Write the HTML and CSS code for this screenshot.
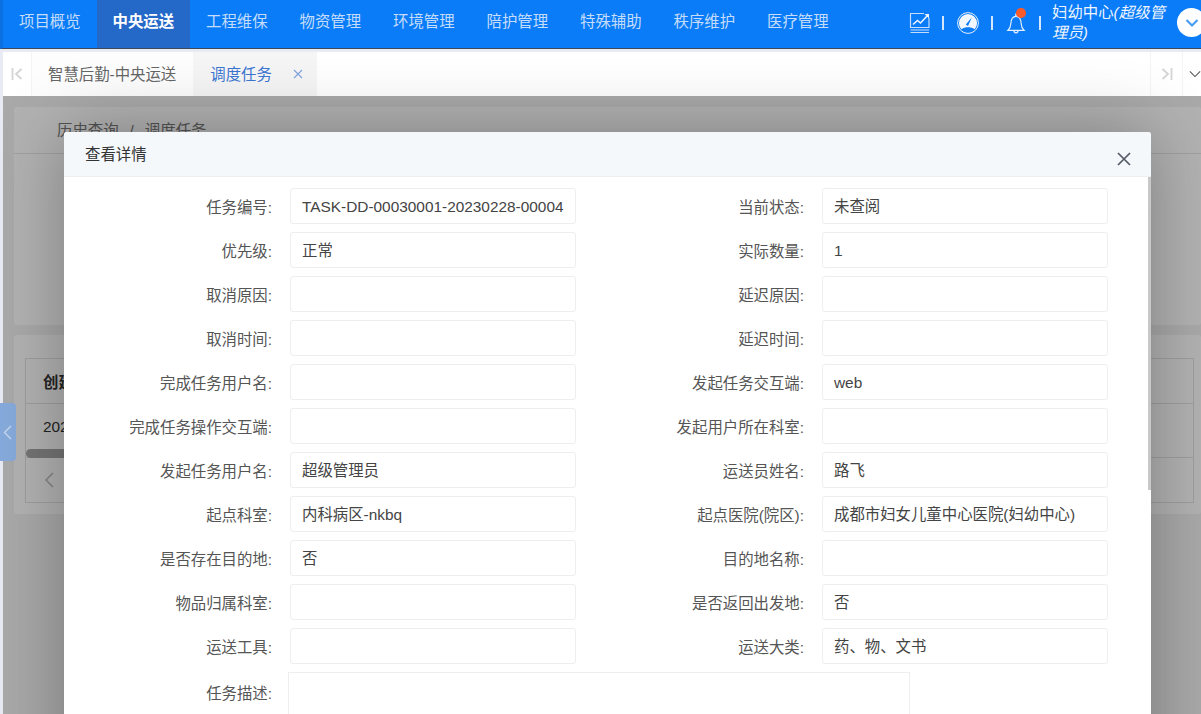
FILE: index.html
```html
<!DOCTYPE html>
<html lang="zh-CN">
<head>
<meta charset="utf-8">
<title>调度任务</title>
<link rel="stylesheet" href="styles.css">
</head>
<body>
<div class="app">
  <header class="topbar">
    <nav class="nav">
      <a class="nav-item">项目概览</a>
      <a class="nav-item active">中央运送</a>
      <a class="nav-item">工程维保</a>
      <a class="nav-item">物资管理</a>
      <a class="nav-item">环境管理</a>
      <a class="nav-item">陪护管理</a>
      <a class="nav-item">特殊辅助</a>
      <a class="nav-item">秩序维护</a>
      <a class="nav-item">医疗管理</a>
    </nav>
    <div class="tools">
      <svg class="tool-icon" viewBox="0 0 22 22" fill="none" stroke="#c5ddfa" stroke-width="1.200">
        <path d="M15 1.500H1.500v14H20V6"/>
        <path d="M4 12.500l4.500-4 3 2.500 7-7.500" stroke-width="1.500" stroke="#eef5ff"/>
        <path d="M15.500 2h4.500v4.500z" fill="#eef5ff" stroke="none"/>
        <path d="M1.500 18h18.500M1.500 20.500h18.500" stroke-width="1.200"/>
      </svg>
      <i class="sep"></i>
      <svg class="tool-icon" viewBox="0 0 22 22">
        <circle cx="11" cy="11" r="10.400" fill="none" stroke="#e4effc" stroke-width="1"/>
        <path d="M2 11a9 9 0 0 1 18 0c0 3-1.200 4.800-2.500 6.200-3.500-2.600-9.500-2.600-13 0C3.200 15.800 2 14 2 11z" fill="#f2f7fe"/>
        <path d="M8.800 12.500l6-7-3.800 8.500z" fill="#0a7cf8"/>
      </svg>
      <i class="sep"></i>
      <span class="bell">
        <svg class="tool-icon" viewBox="0 0 22 22" fill="none" stroke="#e4effc" stroke-width="1.200">
          <path d="M3 18.300c2-1.800 2.700-3.500 2.900-7C6.100 7.500 7.800 4.300 11 4.300s4.900 3.200 5.100 7c.2 3.500.9 5.200 2.900 7z"/>
          <path d="M9 18.800a2 2 0 0 0 4 0"/>
          <path d="M11 1.500v2.800" stroke-width="1.600"/>
        </svg>
        <b class="dot"></b>
      </span>
      <i class="sep"></i>
      <div class="user">妇幼中心<em>(超级管理员)</em></div>
      <span class="avatar">
        <svg viewBox="0 0 14 10" width="14" height="10" fill="none" stroke="#4a9df5" stroke-width="2.200"><path d="M1.500 2l5.500 5.500L12.500 2"/></svg>
      </span>
    </div>
  </header>

  <div class="tabstrip">
    <div class="tab-btn first">
      <svg viewBox="0 0 12 12" width="12" height="12" fill="none" stroke="#d4d4d4" stroke-width="1.800"><path d="M1.500 0v12M10.500 1L5 6l5.500 5"/></svg>
    </div>
    <div class="tab">智慧后勤-中央运送</div>
    <div class="tab current">调度任务
      <svg class="tab-x" viewBox="0 0 10 10" width="10" height="10" fill="none" stroke="#7fa3df" stroke-width="1.100"><path d="M1 1l8 8M9 1l-8 8"/></svg>
    </div>
    <div class="tab-space"></div>
    <div class="tab-btn next">
      <svg viewBox="0 0 12 12" width="12" height="12" fill="none" stroke="#d4d4d4" stroke-width="1.800"><path d="M1.500 1L7 6l-5.500 5M10.500 0v12"/></svg>
    </div>
    <div class="tab-btn more">
      <svg viewBox="0 0 14 8" width="14" height="8" fill="none" stroke="#555" stroke-width="1.200"><path d="M1 1l6 6 6-6"/></svg>
    </div>
  </div>

  <main class="page">
    <section class="panel search-panel">
      <div class="crumbs">历史查询<span class="slash">/</span>调度任务</div>
    </section>
    <section class="panel table-panel">
      <div class="table">
        <div class="thead">创建时间</div>
        <div class="tbody">2023-02-28</div>
        <div class="hscroll"><span class="hthumb"></span></div>
        <div class="tfoot">
          <svg viewBox="0 0 10 16" width="10" height="16" fill="none" stroke="#bdbdbd" stroke-width="1.500"><path d="M9 1L2 8l7 7"/></svg>
        </div>
      </div>
    </section>
  </main>
</div>

<div class="mask"></div>

<button class="side-toggle" type="button" aria-label="收起">
  <svg viewBox="0 0 9 15" width="9" height="15" fill="none" stroke="#c8d9f0" stroke-width="1.300"><path d="M8 1L1.500 7.500 8 14"/></svg>
</button>

<div class="modal">
  <div class="modal-head">
    <span class="modal-title">查看详情</span>
    <svg class="modal-close" viewBox="0 0 14 14" width="14" height="14" fill="none" stroke="#555b66" stroke-width="1.700"><path d="M1 1l12 12M13 1L1 13"/></svg>
  </div>
  <div class="modal-body">
    <form class="form">
      <div class="field"><label>任务编号:</label><div class="control">TASK-DD-00030001-20230228-00004</div></div>
      <div class="field"><label>当前状态:</label><div class="control">未查阅</div></div>
      <div class="field"><label>优先级:</label><div class="control">正常</div></div>
      <div class="field"><label>实际数量:</label><div class="control">1</div></div>
      <div class="field"><label>取消原因:</label><div class="control"></div></div>
      <div class="field"><label>延迟原因:</label><div class="control"></div></div>
      <div class="field"><label>取消时间:</label><div class="control"></div></div>
      <div class="field"><label>延迟时间:</label><div class="control"></div></div>
      <div class="field"><label>完成任务用户名:</label><div class="control"></div></div>
      <div class="field"><label>发起任务交互端:</label><div class="control">web</div></div>
      <div class="field"><label>完成任务操作交互端:</label><div class="control"></div></div>
      <div class="field"><label>发起用户所在科室:</label><div class="control"></div></div>
      <div class="field"><label>发起任务用户名:</label><div class="control">超级管理员</div></div>
      <div class="field"><label>运送员姓名:</label><div class="control">路飞</div></div>
      <div class="field"><label>起点科室:</label><div class="control">内科病区-nkbq</div></div>
      <div class="field"><label>起点医院(院区):</label><div class="control">成都市妇女儿童中心医院(妇幼中心)</div></div>
      <div class="field"><label>是否存在目的地:</label><div class="control">否</div></div>
      <div class="field"><label>目的地名称:</label><div class="control"></div></div>
      <div class="field"><label>物品归属科室:</label><div class="control"></div></div>
      <div class="field"><label>是否返回出发地:</label><div class="control">否</div></div>
      <div class="field"><label>运送工具:</label><div class="control"></div></div>
      <div class="field"><label>运送大类:</label><div class="control">药、物、文书</div></div>
      <div class="field wide"><label>任务描述:</label><div class="control area"></div></div>
    </form>
    <span class="scroll-thumb"></span>
  </div>
</div>
</body>
</html>
```
FILE: styles.css
```css
* { box-sizing: border-box; }
html, body { margin: 0; height: 100%; overflow: hidden; }
body {
  position: relative;
  width: 1201px;
  height: 714px;
  background: #e8eaf4;
  font-family: "Liberation Sans", "Noto Sans CJK SC", sans-serif;
  font-size: 15.4px;
  color: #333;
}
.app { display: flex; flex-direction: column; height: 714px; padding-left: 3px; }

.topbar {
  display: flex;
  justify-content: space-between;
  flex: none;
  height: 49px;
  margin-left: -3px;
  background: #0a7cf8;
  border-left: 3px solid #0a6fe0;
  border-bottom: 1px solid #3c4a5c;
}
.nav { display: flex; }
.nav-item {
  display: flex;
  align-items: center;
  width: 93.5px;
  padding: 0 0 8px 16px;
  color: #c5ddfa;
}
.nav-item.active { background: #2468c8; color: #fff; font-weight: 700; }
.tools { display: flex; align-items: center; padding-bottom: 3px; }
.tool-icon { display: block; width: 22px; height: 22px; }
.sep { flex: none; width: 2px; height: 14px; margin: 0 13px 0 11.5px; background: #d5e6fb; }
.bell { position: relative; display: block; left: -1px; }
.dot {
  position: absolute;
  top: -3.5px;
  right: 1px;
  width: 9.500px;
  height: 9.500px;
  border-radius: 50%;
  background: #fb5a2a;
}
.user {
  flex: none;
  width: 120px;
  margin-left: -2px;
  line-height: 19.500px;
  color: #eef5ff;
}
.user em { font-style: italic; }
.avatar {
  display: flex;
  align-items: center;
  justify-content: center;
  flex: none;
  width: 29px;
  height: 29px;
  margin: 0 -5px 0 5px;
  border-radius: 50%;
  background: #fff;
}

.tabstrip {
  display: flex;
  flex: none;
  height: 44px;
  margin-top: 3px;
  background: #fff;
  color: #666;
}
.tab-btn { display: flex; align-items: center; justify-content: center; flex: none; }
.tab-btn.first { width: 29px; border-right: 1px solid #f4f4f4; }
.tab-btn.next { width: 33px; border-left: 1px solid #f4f4f4; border-right: 1px solid #f4f4f4; }
.tab-btn.more { width: 18px; padding-left: 6px; justify-content: flex-start; }
.tab { display: flex; align-items: center; padding: 0 17px 2px 16px; background: #fdfdfd; }
.tab.current { width: 124px; padding: 0 0 2px 17px; background: #f5f5f5; color: #3b76d2; }
.tab-x { flex: none; margin: 2px 0 0 21px; }
.tab-space { flex: 1; }

.page { flex: 1; min-height: 0; padding: 11px 0 0 11px; background: #f3f3f3; }
.panel { background: #fff; border-radius: 3px; }
.search-panel { height: 218px; }
.crumbs {
  height: 47px;
  padding: 11px 0 0 43px;
  border-bottom: 1px solid #e6e6e6;
  color: #777;
}
.slash { margin: 0 11px; }
.table-panel { height: 179px; margin-top: 10px; padding: 23px 7px 0 11px; }
.table { height: 145px; border: 1px solid #e3e3e3; }
.thead {
  display: flex;
  align-items: center;
  height: 45px;
  padding-left: 17px;
  font-weight: 700;
  border-bottom: 1px solid #e3e3e3;
}
.tbody { display: flex; align-items: center; height: 45px; padding-left: 17px; }
.hscroll { height: 9px; border-bottom: 1px solid #e3e3e3; }
.hthumb { display: block; width: 300px; height: 9px; border-radius: 5px 0 0 5px; background: #a6a6a6; }
.tfoot { height: 44px; padding: 14px 0 0 18px; }

.mask {
  position: absolute;
  left: 3px;
  right: 0;
  top: 96px;
  bottom: 0;
  background: rgba(0, 0, 0, .3);
  z-index: 2;
}
.side-toggle {
  position: absolute;
  left: 0;
  top: 403px;
  display: flex;
  align-items: center;
  width: 16px;
  height: 58px;
  padding: 0 0 0 3px;
  border: 0;
  border-radius: 0 4px 4px 0;
  background: #86aadb;
  z-index: 3;
}

.modal {
  position: absolute;
  left: 64px;
  top: 132px;
  width: 1087px;
  height: 720px;
  background: #fff;
  border-radius: 3px;
  box-shadow: 0 0 70px rgba(0, 0, 0, .3);
  z-index: 3;
}
.modal-head {
  display: flex;
  align-items: center;
  justify-content: space-between;
  height: 45px;
  padding: 0 20px 0 21px;
  background: #f5f8fb;
  border-radius: 3px 3px 0 0;
  border-bottom: 1px solid #edf0f3;
}
.modal-title { margin-top: -2px; color: #333; }
.modal-close { margin-top: 10px; }
.modal-body { position: relative; padding: 11px 0 0 1px; }
.form {
  display: grid;
  grid-template-columns: 532px 532px;
  row-gap: 8px;
}
.field { display: flex; align-items: center; height: 36px; }
.field label {
  flex: none;
  width: 207px;
  margin-right: 18px;
  text-align: right;
  white-space: nowrap;
  color: #555;
}
.control {
  width: 286px;
  height: 36px;
  padding: 0 11px;
  border: 1px solid #eeeeee;
  border-radius: 3px;
  line-height: 35px;
  color: #444;
  white-space: nowrap;
}
.field.wide { grid-column: 1 / -1; height: 120px; align-items: flex-start; }
.field.wide label { margin: 9px 16px 0 0; }
.control.area { width: 622px; height: 120px; border-radius: 0; }
.scroll-thumb {
  position: absolute;
  top: 0;
  right: 0;
  width: 3px;
  height: 313px;
  background: #c8c8c8;
}
```
